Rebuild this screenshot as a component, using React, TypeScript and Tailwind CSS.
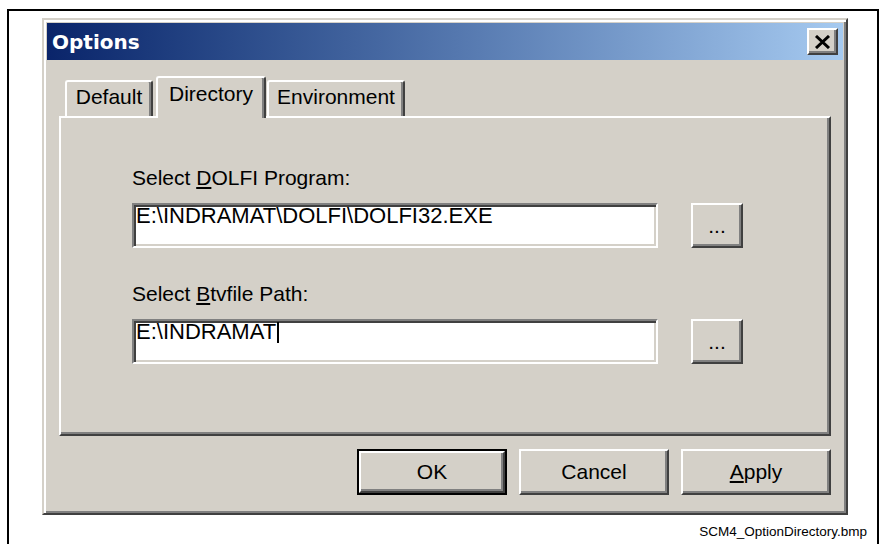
import { ReactNode } from "react";

const raised =
  "border-2 border-t-white border-l-white border-r-[#404040] border-b-[#404040] shadow-[inset_-2px_-2px_0_#808080]";
const sunken =
  "border-2 border-t-[#808080] border-l-[#808080] border-r-white border-b-white shadow-[inset_2px_2px_0_#404040,inset_-2px_-2px_0_#d4d0c8]";

type TabProps = {
  label: string;
  active?: boolean;
  className?: string;
};

const Tab = ({ label, active, className }: TabProps) => (
  <div
    className={`flex justify-center rounded-t-[3px] border-t-2 border-l-2 border-r-2 border-t-white border-l-white border-r-[#404040] bg-[#d4d0c8] shadow-[inset_-2px_0_0_#808080] ${
      active ? "relative z-10 -mb-[2px] h-[42px] pt-[4px]" : "h-[36px] pt-[3px]"
    } ${className ?? ""}`}
  >
    <span className="text-[21px] leading-[24px]">{label}</span>
  </div>
);

type ButtonProps = {
  children: ReactNode;
  primary?: boolean;
};

const DialogButton = ({ children, primary }: ButtonProps) => {
  if (primary) {
    return (
      <div className="w-[150px] h-[46px] border-2 border-black">
        <div
          className={`h-full flex items-center justify-center text-[21px] ${raised}`}
        >
          {children}
        </div>
      </div>
    );
  }
  return (
    <div
      className={`w-[150px] h-[46px] flex items-center justify-center text-[21px] ${raised}`}
    >
      {children}
    </div>
  );
};

type FieldProps = {
  label: ReactNode;
  value: string;
  caret?: boolean;
  className?: string;
};

const PathField = ({ label, value, caret, className }: FieldProps) => (
  <div className={className}>
    <div className="text-[21px] leading-[24px]">{label}</div>
    <div className="flex mt-[13px]">
      <div
        className={`w-[526px] h-[45px] bg-white pl-[2px] pt-[1px] text-[22px] leading-[20px] ${sunken}`}
      >
        {value}
        {caret && (
          <span className="inline-block w-[2px] h-[21px] bg-black align-top ml-[1px]" />
        )}
      </div>
      <div
        className={`ml-[33px] w-[52px] h-[45px] flex items-center justify-center text-[21px] ${raised}`}
      >
        ...
      </div>
    </div>
  </div>
);

export default function App() {
  return (
    <div
      className="w-[884px] h-[544px] bg-white pl-[7px] pt-[9px] overflow-hidden text-black"
      style={{ fontFamily: '"Liberation Sans", Arial, sans-serif' }}
    >
      <div className="w-[872px] h-[535px] border-x-2 border-t-2 border-black flex flex-col">
        {/* Options dialog */}
        <div className="ml-[33px] mt-[7px] w-[806px] h-[497px] bg-[#d4d0c8] border-2 border-t-[#d4d0c8] border-l-[#d4d0c8] border-r-[#404040] border-b-[#404040] shadow-[inset_2px_2px_0_#fff,inset_-2px_-2px_0_#808080] p-[3px] flex flex-col">
          <div className="h-[37px] flex items-center justify-between pl-[5px] pr-[5px] bg-linear-to-r from-[#0a246a] to-[#a6caf0]">
            <span
              className="text-white text-[20px] font-bold leading-none"
              style={{ fontFamily: '"DejaVu Sans", sans-serif' }}
            >
              Options
            </span>
            <div
              className={`w-[31px] h-[27px] bg-[#d4d0c8] flex items-center justify-center ${raised}`}
            >
              <svg width="17" height="14" viewBox="0 0 17 14">
                <path
                  d="M2 1 L15 13 M15 1 L2 13"
                  stroke="#000"
                  strokeWidth="3"
                  fill="none"
                />
              </svg>
            </div>
          </div>

          <div className="flex-1 px-[12px] pt-[16px] flex flex-col">
            <div className="flex items-end h-[40px]">
              <Tab label="Default" className="ml-[6px] w-[88px]" />
              <Tab label="Directory" active className="ml-[3px] w-[110px]" />
              <Tab label="Environment" className="ml-[1px] w-[138px]" />
            </div>

            <div
              className={`h-[320px] pt-[48px] pl-[71px] border-2 border-t-white border-l-white border-r-[#404040] border-b-[#404040] shadow-[inset_-2px_-2px_0_#808080]`}
            >
              <PathField
                label={
                  <>
                    Select <span className="underline">D</span>OLFI Program:
                  </>
                }
                value="E:\INDRAMAT\DOLFI\DOLFI32.EXE"
              />
              <PathField
                className="mt-[34px]"
                label={
                  <>
                    Select <span className="underline">B</span>tvfile Path:
                  </>
                }
                value="E:\INDRAMAT"
                caret
              />
            </div>

            <div className="flex justify-end gap-[12px] mt-[13px]">
              <DialogButton primary>OK</DialogButton>
              <DialogButton>Cancel</DialogButton>
              <DialogButton>
                <span>
                  <span className="underline">A</span>pply
                </span>
              </DialogButton>
            </div>
          </div>
        </div>

        <div className="mt-auto self-end pr-[10px] pb-[4px] text-[13.5px] leading-[16px]">
          SCM4_OptionDirectory.bmp
        </div>
      </div>
    </div>
  );
}
